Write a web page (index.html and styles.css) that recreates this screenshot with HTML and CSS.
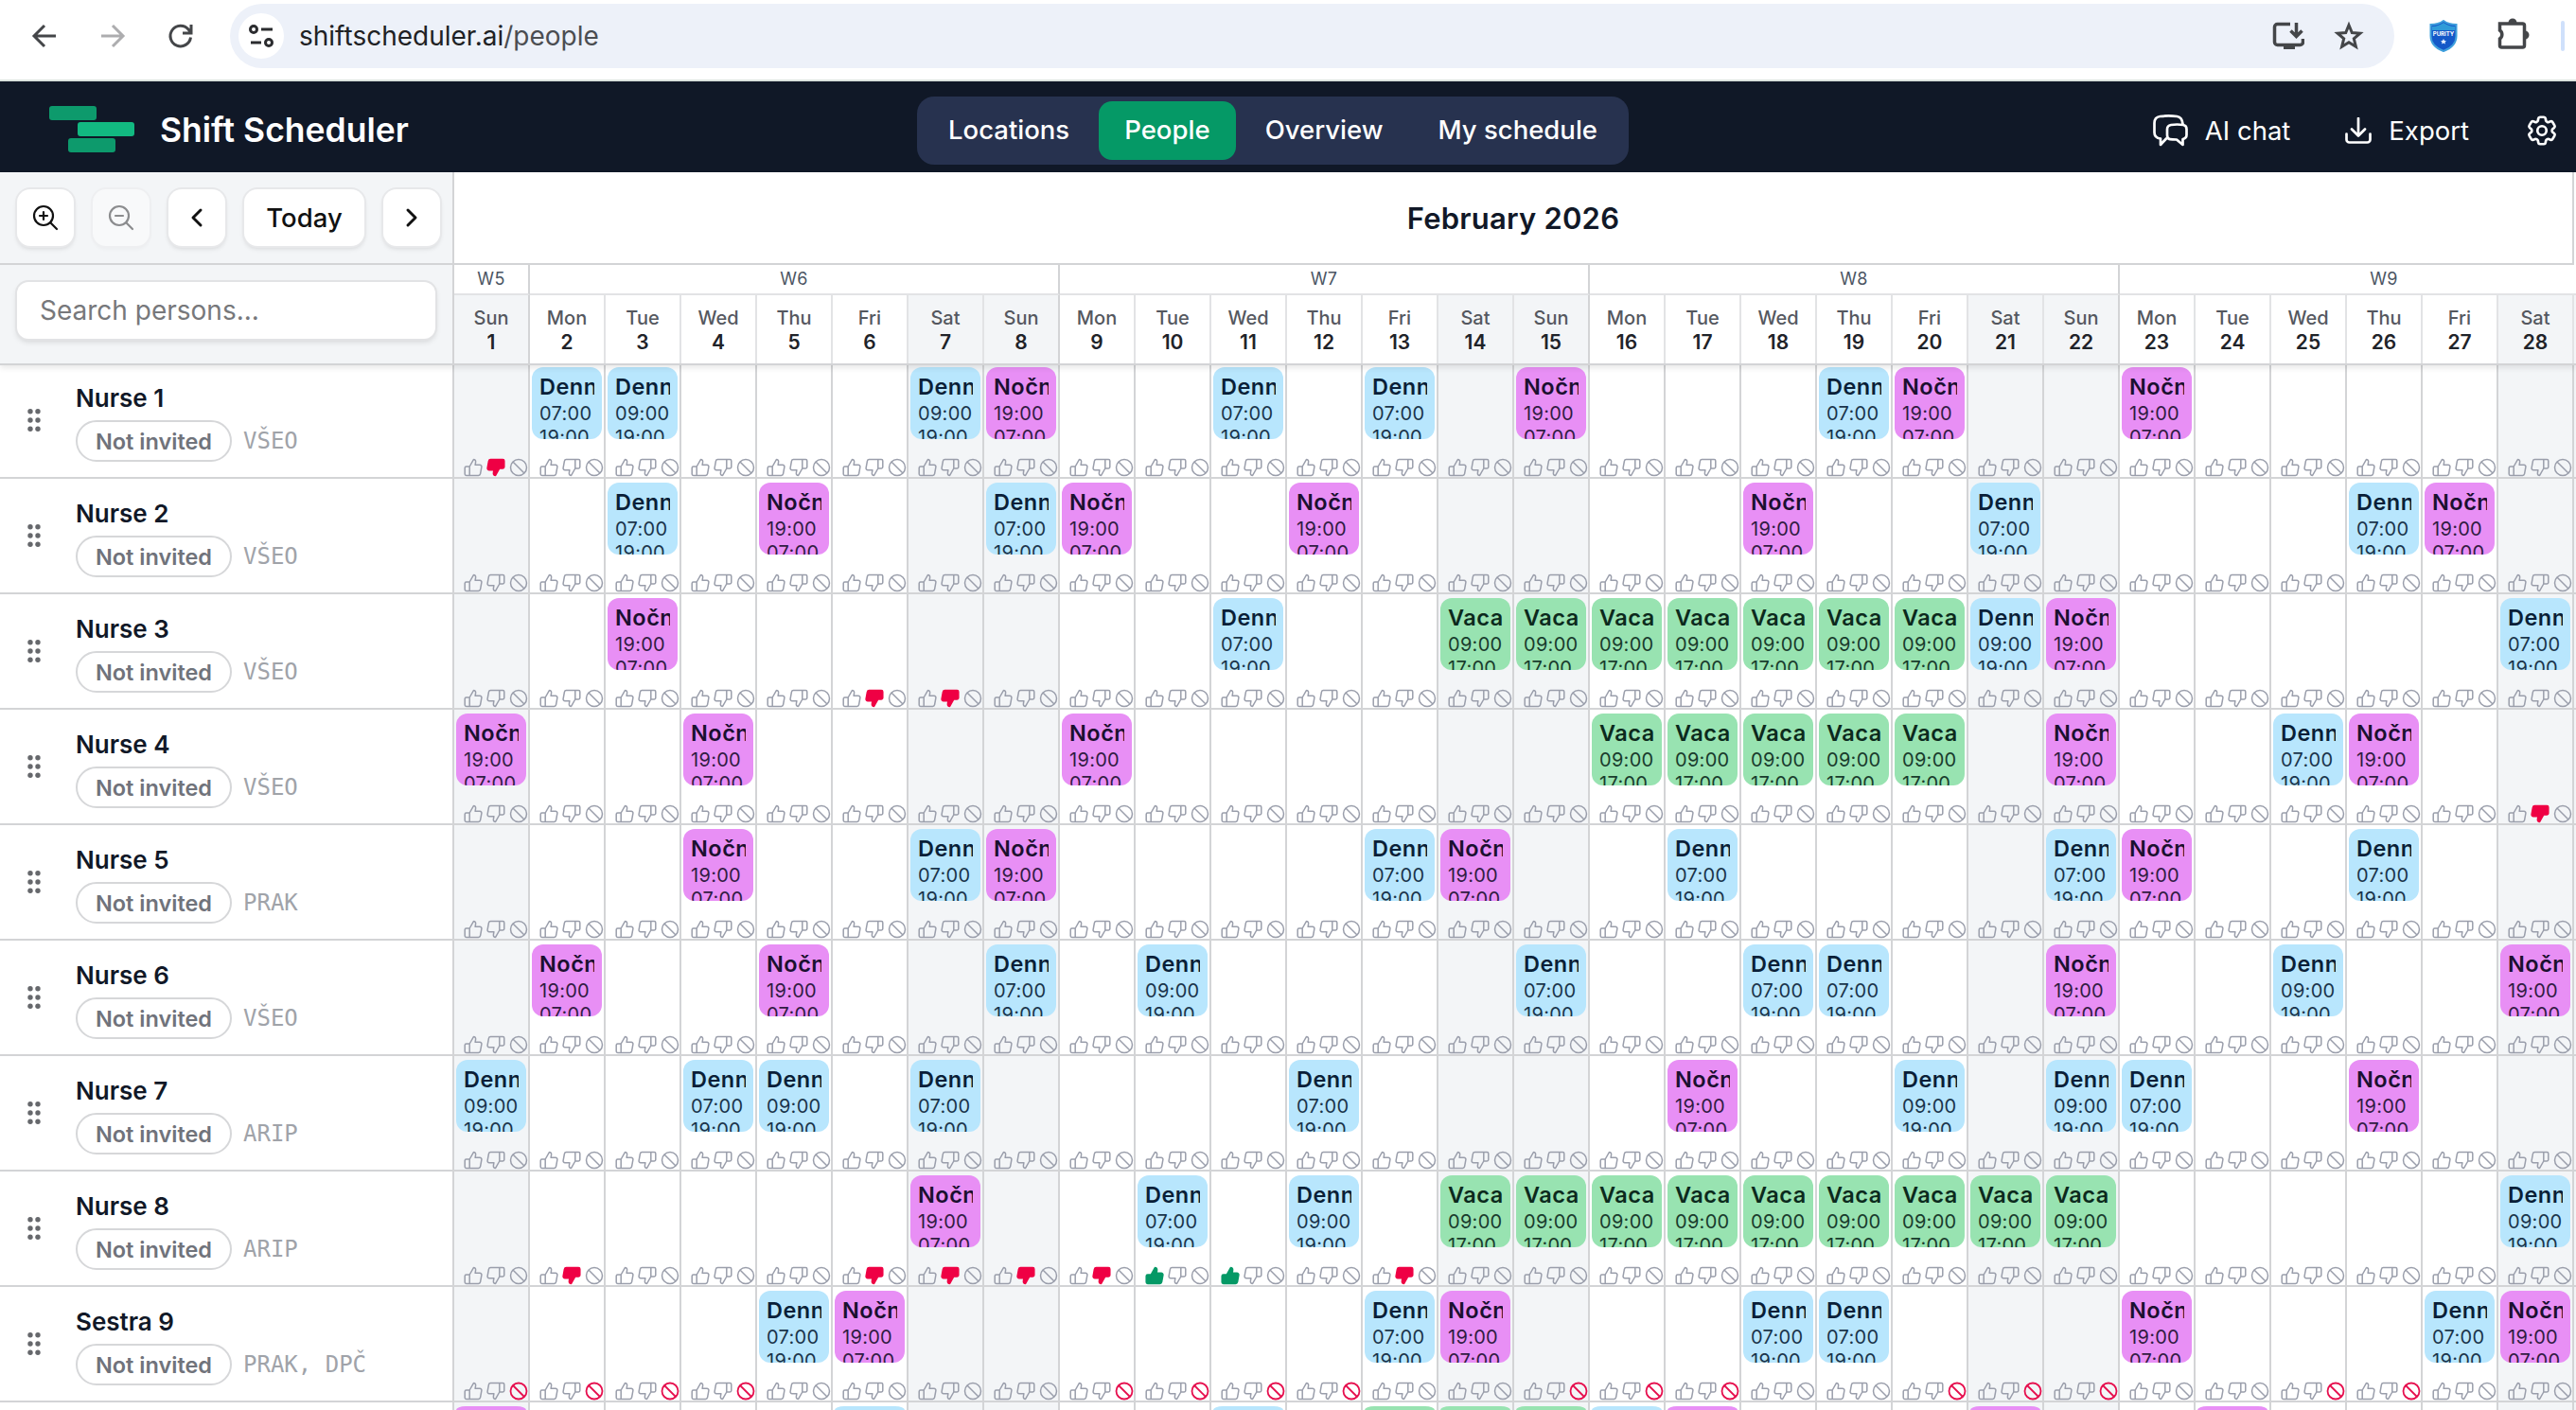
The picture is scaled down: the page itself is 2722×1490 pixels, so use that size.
FILE: index.html
```html
<!DOCTYPE html>
<html lang="en">
<head>
    <meta charset="UTF-8">
    <meta name="viewport" content="width=device-width, initial-scale=1.0">
    <title>Shift Scheduler</title>
    <link rel="stylesheet" href="styles.css">
</head>
<body>
    <svg class="symbols" aria-hidden="true">
        <symbol id="icon-up" viewBox="0 0 20 20">
            <path d="M6.2 9 10.4 1.6c1.5 0 2.5 1.1 2.2 2.7l-.5 3h4.9c1.3 0 2.1 1 1.9 2.1l-1.3 7.3c-.2 1-.9 1.7-2 1.7H6.2zM6.2 9H2.7c-.9 0-1.5.6-1.5 1.4V17c0 .8.6 1.4 1.5 1.4h3.5"/>
        </symbol>
        <symbol id="icon-down" viewBox="0 0 20 20">
            <path transform="rotate(180 10 10)" d="M6.2 9 10.4 1.6c1.5 0 2.5 1.1 2.2 2.7l-.5 3h4.9c1.3 0 2.1 1 1.9 2.1l-1.3 7.3c-.2 1-.9 1.7-2 1.7H6.2zM6.2 9H2.7c-.9 0-1.5.6-1.5 1.4V17c0 .8.6 1.4 1.5 1.4h3.5"/>
        </symbol>
        <symbol id="icon-ban" viewBox="0 0 20 20">
            <circle cx="10" cy="10" r="8.5"/>
            <path d="M4 4l12 12"/>
        </symbol>
    </svg>

    <div class="browser-bar">
        <div class="browser-nav">
            <svg width="28" height="28" viewBox="0 0 28 28"><path d="M26 14H3M14 3 3 14l11 11"/></svg>
            <svg class="disabled" width="28" height="28" viewBox="0 0 28 28"><path d="M2 14h23M14 3l11 11-11 11"/></svg>
            <svg width="28" height="28" viewBox="0 0 28 28"><path d="M24.5 15.5A10.8 10.8 0 1 1 22 7l2.5 3M25 2v9h-9"/></svg>
        </div>
        <div class="address">
            <span class="site-info">
                <svg width="26" height="26" viewBox="0 0 26 26"><circle cx="5" cy="6" r="3.5"/><path d="M13 6h12M2 20h11"/><circle cx="21" cy="20" r="3.5"/></svg>
            </span>
            <span class="url">shiftscheduler.ai<span>/people</span></span>
            <svg class="install" width="34" height="32" viewBox="0 0 34 32"><path d="M19 3.500H5.500a3 3 0 0 0-3 3v16a3 3 0 0 0 3 3h24a3 3 0 0 0 3-3V19M25.500 2v14M19.500 10.500l6 6 6-6"/><path class="solid" d="M12 26h12v4H12z"/></svg>
            <svg class="star" width="32" height="32" viewBox="0 0 32 32"><path d="M16 4.500l3.300 8 8.600.7-6.600 5.600 2.100 8.500L16 22.700l-7.400 4.600 2.100-8.500-6.600-5.600 8.600-.7z"/></svg>
        </div>
        <svg class="shield" width="30" height="34" viewBox="0 0 30 34">
            <path d="M15 1c4 3 8 4 13.500 4v12c0 8-5.500 13-13.500 16C7 30 1.500 25 1.500 17V5C7 5 11 4 15 1z" fill="#1458c8" stroke="#3f9fdc" stroke-width="2"/>
            <path d="M3 7c5 0 9-2 12-4 3 2 7 4 12 4v4H3z" fill="#2f9bd8"/>
            <text x="15" y="17" text-anchor="middle">PURITY</text>
            <path d="M15 20l1 2h2l-1.500 1.500.5 2-2-1-2 1 .5-2L12 22h2z" fill="#e6f1ff"/>
        </svg>
        <svg class="puzzle" width="36" height="36" viewBox="0 0 36 36"><path d="M5 8h22.500a2 2 0 0 1 2 2v21a2 2 0 0 1-2 2H5.500a2 2 0 0 1-2-2v-7a5.500 5.500 0 0 0 0-9V8z"/><path class="solid" d="M12.500 7a4.500 4.500 0 0 1 9 0zM30 15.500a4.500 4.500 0 0 1 0 9z"/></svg>
        <span class="browser-divider"></span>
    </div>

    <header class="app-header">
        <div class="brand">
            <svg width="92" height="50" viewBox="0 0 92 50">
                <rect x="0" y="0" width="50" height="15" rx="3" fill="#0d9a6c"/>
                <rect x="30" y="17" width="60" height="15" rx="3" fill="#12b981"/>
                <rect x="20" y="34" width="50" height="15" rx="3" fill="#0d9a6c"/>
            </svg>
            <span>Shift Scheduler</span>
        </div>
        <nav class="tabs">
            <a>Locations</a>
            <a class="active">People</a>
            <a>Overview</a>
            <a>My schedule</a>
        </nav>
        <div class="actions">
            <a class="chat">
                <svg width="38" height="36" viewBox="0 0 38 36"><path d="M9 26.500V33l6-6.500M9 26.500C4 26 2.500 23 2.500 20V10c0-4.500 2.500-6.500 6-7 6-.7 12-.7 18 0 3.500.5 5.500 3 6 8"/><path d="M20 12c4-.6 9-.6 13 0 2.500.4 3.500 2 3.500 4.500v6c0 2.500-1.500 4-4 4.500v6L26 27.500c-3 0-5 0-7-.3-2.500-.4-3-2-3-4.400v-6c0-3 1.500-4.400 4-4.800z"/></svg>
                AI chat
            </a>
            <a class="export">
                <svg width="28" height="28" viewBox="0 0 28 28"><path d="M14 1v18M7 12.500l7 7 7-7M1.500 17.500v6a3 3 0 0 0 3 3h19a3 3 0 0 0 3-3v-6"/></svg>
                Export
            </a>
            <svg class="gear" viewBox="0 0 24 24"><path d="M9.594 3.940c.090-.542.560-.940 1.110-.940h2.593c.550 0 1.020.398 1.110.940l.213 1.281c.063.374.313.686.645.870.074.040.147.083.220.127.325.196.720.257 1.075.124l1.217-.456a1.125 1.125 0 0 1 1.370.490l1.296 2.247a1.125 1.125 0 0 1-.260 1.431l-1.003.827c-.293.241-.438.613-.430.992a7.723 7.723 0 0 1 0 .255c-.008.378.137.750.430.991l1.004.827c.424.350.534.955.260 1.430l-1.298 2.247a1.125 1.125 0 0 1-1.369.491l-1.217-.456c-.355-.133-.750-.072-1.076.124a6.470 6.470 0 0 1-.220.128c-.331.183-.581.495-.644.869l-.213 1.281c-.090.543-.560.940-1.110.940h-2.594c-.550 0-1.019-.398-1.110-.940l-.213-1.281c-.062-.374-.312-.686-.644-.870a6.520 6.520 0 0 1-.220-.127c-.325-.196-.720-.257-1.076-.124l-1.217.456a1.125 1.125 0 0 1-1.369-.490l-1.297-2.247a1.125 1.125 0 0 1 .260-1.431l1.004-.827c.292-.240.437-.613.430-.991a6.932 6.932 0 0 1 0-.255c.007-.380-.138-.751-.430-.992l-1.004-.827a1.125 1.125 0 0 1-.260-1.430l1.297-2.247a1.125 1.125 0 0 1 1.370-.491l1.216.456c.356.133.751.072 1.076-.124.072-.044.146-.086.220-.128.332-.183.582-.495.644-.869l.214-1.280Z"/><circle cx="12" cy="12" r="3"/></svg>
        </div>
    </header>

    <div class="calendar-head">
        <div class="side-head">
            <div class="toolbar">
                <button class="btn"><svg width="28" height="28" viewBox="0 0 28 28"><circle cx="12" cy="12" r="10"/><path d="M19.500 19.500 26 26M12 8v8M8 12h8"/></svg></button>
                <button class="btn off"><svg width="28" height="28" viewBox="0 0 28 28"><circle cx="12" cy="12" r="10"/><path d="M19.500 19.500 26 26M8 12h8"/></svg></button>
                <button class="btn chevron"><svg width="28" height="28" viewBox="0 0 28 28"><path d="M18 6l-8 8 8 8"/></svg></button>
                <button class="btn today">Today</button>
                <button class="btn chevron"><svg width="28" height="28" viewBox="0 0 28 28"><path d="M10 6l8 8-8 8"/></svg></button>
            </div>
            <div class="search"><input type="text" placeholder="Search persons..."></div>
        </div>
        <div class="timeline-head">
            <div class="month">February 2026</div>
            <div class="weeks" id="weeks"></div>
            <div class="days" id="days"></div>
        </div>
    </div>
    <div class="rows" id="rows"></div>

    <script src="schedule.js"></script>
</body>
</html>
```
FILE: schedule.js
```js
var dayNames = ['Sun', 'Mon', 'Tue', 'Wed', 'Thu', 'Fri', 'Sat'];

var shiftTypes = {
    D7: ['Denn', '07:00', '19:00', 'denni'],
    D9: ['Denn', '09:00', '19:00', 'denni'],
    N: ['Nočn', '19:00', '07:00', 'nocni'],
    V: ['Vaca', '09:00', '17:00', 'vacation']
};

// shifts are keyed by the day of month, up / down / ban list the days with a wish set
var people = [
    { name: 'Nurse 1', tags: 'VŠEO', shifts: { 2: 'D7', 3: 'D9', 7: 'D9', 8: 'N', 11: 'D7', 13: 'D7', 15: 'N', 19: 'D7', 20: 'N', 23: 'N' }, down: [1] },
    { name: 'Nurse 2', tags: 'VŠEO', shifts: { 3: 'D7', 5: 'N', 8: 'D7', 9: 'N', 12: 'N', 18: 'N', 21: 'D7', 26: 'D7', 27: 'N' } },
    { name: 'Nurse 3', tags: 'VŠEO', shifts: { 3: 'N', 11: 'D7', 14: 'V', 15: 'V', 16: 'V', 17: 'V', 18: 'V', 19: 'V', 20: 'V', 21: 'D9', 22: 'N', 28: 'D7' }, down: [6, 7] },
    { name: 'Nurse 4', tags: 'VŠEO', shifts: { 1: 'N', 4: 'N', 9: 'N', 16: 'V', 17: 'V', 18: 'V', 19: 'V', 20: 'V', 22: 'N', 25: 'D7', 26: 'N' }, down: [28] },
    { name: 'Nurse 5', tags: 'PRAK', shifts: { 4: 'N', 7: 'D7', 8: 'N', 13: 'D7', 14: 'N', 17: 'D7', 22: 'D7', 23: 'N', 26: 'D7' } },
    { name: 'Nurse 6', tags: 'VŠEO', shifts: { 2: 'N', 5: 'N', 8: 'D7', 10: 'D9', 15: 'D7', 18: 'D7', 19: 'D7', 22: 'N', 25: 'D9', 28: 'N' } },
    { name: 'Nurse 7', tags: 'ARIP', shifts: { 1: 'D9', 4: 'D7', 5: 'D9', 7: 'D7', 12: 'D7', 17: 'N', 20: 'D9', 22: 'D9', 23: 'D7', 26: 'N' } },
    { name: 'Nurse 8', tags: 'ARIP', shifts: { 7: 'N', 10: 'D7', 12: 'D9', 14: 'V', 15: 'V', 16: 'V', 17: 'V', 18: 'V', 19: 'V', 20: 'V', 21: 'V', 22: 'V', 28: 'D9' }, up: [10, 11], down: [2, 6, 7, 8, 9, 13] },
    { name: 'Sestra 9', tags: 'PRAK, DPČ', shifts: { 5: 'D7', 6: 'N', 13: 'D7', 14: 'N', 18: 'D7', 19: 'D7', 23: 'N', 27: 'D7', 28: 'N' }, ban: [1, 2, 3, 4, 9, 10, 11, 12, 15, 16, 17, 20, 21, 22, 25, 26] }
];

// Next row, only its top edge is in view
var nextShifts = { 1: 'N', 6: 'D7', 11: 'D7', 13: 'V', 14: 'V', 15: 'V', 16: 'D7', 17: 'N', 21: 'N', 24: 'N' };

function isWeekend(day) {
    return day % 7 <= 1;
}

function icon(kind, person, day) {
    var on = person[kind] && person[kind].indexOf(day) !== -1;
    return '<svg class="wish ' + kind + (on ? ' on' : '') + '"><use href="#icon-' + kind + '"/></svg>';
}

function cell(person, day) {
    var html = '<div class="cell' + (isWeekend(day) ? ' weekend' : '') + '"><div class="slot">';
    if (person.shifts[day]) {
        var t = shiftTypes[person.shifts[day]];
        html += '<div class="shift ' + t[3] + '"><b>' + t[0] + '</b><span>' + t[1] + '</span><span>' + t[2] + '</span></div>';
    }
    html += '</div><div class="wishes">' + icon('up', person, day) + icon('down', person, day) + icon('ban', person, day) + '</div>';
    return html + '</div>';
}

// Header
document.getElementById('weeks').innerHTML = [5, 6, 7, 8, 9].map(function (w) {
    return '<div class="week' + (w === 5 ? ' short' : '') + '">W' + w + '</div>';
}).join('');

var days = '';
for (var d = 1; d <= 28; d++) {
    days += '<div class="day' + (isWeekend(d) ? ' weekend' : '') + (d % 7 === 1 ? ' week-end' : '') + '"><span>' + dayNames[(d - 1) % 7] + '</span><b>' + d + '</b></div>';
}
document.getElementById('days').innerHTML = days + '<div class="rest"></div>';

// Rows
var dots = '<svg class="handle" width="16" height="26" viewBox="0 0 16 26">';
[3.7, 13, 22.3].forEach(function (y) {
    dots += '<circle cx="4" cy="' + y + '" r="2.7"/><circle cx="12" cy="' + y + '" r="2.7"/>';
});
dots += '</svg>';

var rows = people.map(function (p) {
    var html = '<div class="row"><div class="person">' + dots +
        '<div class="info"><div class="name">' + p.name + '</div>' +
        '<div class="meta"><span class="pill">Not invited</span><span class="tags">' + p.tags + '</span></div></div></div>';
    for (var i = 1; i <= 28; i++) {
        html += cell(p, i);
    }
    return html + '<div class="rest"></div></div>';
}).join('');

rows += '<div class="row peek"><div class="person"></div>';
for (var n = 1; n <= 28; n++) {
    rows += '<div class="cell' + (isWeekend(n) ? ' weekend' : '') + '">' +
        (nextShifts[n] ? '<div class="edge ' + shiftTypes[nextShifts[n]][3] + '"></div>' : '') + '</div>';
}
document.getElementById('rows').innerHTML = rows + '<div class="rest"></div></div>';
```
FILE: styles.css
```css
* {
    box-sizing: border-box;
}

body {
    margin: 0;
    height: 1490px;
    overflow: hidden;
    background-color: #fff;
    font-family: Inter, sans-serif;
    color: #111827;
}

svg {
    display: block;
    flex-shrink: 0;
    fill: none;
    stroke: currentColor;
}

.symbols {
    position: absolute;
    width: 0;
    height: 0;
}

/* Browser bar */
.browser-bar {
    display: flex;
    align-items: center;
    height: 86px;
    padding-bottom: 8px;
    border-bottom: 2px solid #dbe3de;
    color: #444649;
}

.browser-nav {
    display: flex;
    gap: 44px;
    padding-left: 33px;
    width: 243px;
}

.browser-nav svg {
    stroke-width: 3;
}

.browser-nav .disabled {
    color: #adadaf;
}

.address {
    display: flex;
    align-items: center;
    width: 2287px;
    height: 68px;
    padding: 0 32px 0 9px;
    border-radius: 34px;
    background-color: #edf1f9;
}

.site-info {
    display: flex;
    align-items: center;
    justify-content: center;
    width: 48px;
    height: 48px;
    border-radius: 50%;
    background-color: #fff;
    color: #2b2c2f;
}

.site-info svg {
    stroke-width: 3;
}

.url {
    flex: 1;
    margin-left: 16px;
    font-size: 28px;
    color: #202124;
}

.url span {
    color: #4b4d51;
}

.install {
    margin-right: 31px;
    stroke-width: 3.5;
}

.star {
    stroke-width: 3;
}

.solid {
    fill: currentColor;
    stroke: none;
}

.shield {
    margin-left: 37px;
    stroke: none;
}

.shield text {
    font-size: 6px;
    font-weight: 700;
    fill: #fff;
}

.puzzle {
    margin: -6px 0 0 41px;
    stroke-width: 3.5;
}

.browser-divider {
    width: 4px;
    height: 32px;
    margin-left: 32px;
    border-radius: 2px;
    background-color: #cfe0fb;
}

/* App header */
.app-header {
    display: grid;
    grid-template-columns: 969px 752px 1fr;
    align-items: center;
    height: 96px;
    padding-top: 8px;
    background-color: #101827;
    color: #fff;
}

.brand {
    display: flex;
    align-items: center;
    gap: 25px;
    padding-left: 52px;
    font-size: 35.5px;
    font-weight: 600;
    line-height: 44px;
}

.brand svg {
    margin-top: -3px;
    stroke: none;
}

.tabs {
    display: flex;
    justify-content: space-between;
    align-items: center;
    height: 72px;
    padding: 0 6px;
    border-radius: 18px;
    background-color: #27324f;
    font-size: 27.5px;
    font-weight: 500;
}

.tabs a {
    height: 62px;
    padding: 0 27px;
    border-radius: 14px;
    line-height: 61px;
    white-space: nowrap;
}

.tabs .active {
    background-color: #059966;
}

.actions {
    display: flex;
    align-items: center;
    justify-content: flex-end;
    padding-right: 19px;
    font-size: 27.5px;
}

.actions a {
    display: flex;
    align-items: center;
    white-space: nowrap;
}

.actions svg {
    stroke-width: 2.7;
    stroke-linecap: round;
    stroke-linejoin: round;
}

.chat {
    gap: 18px;
    margin-right: 58px;
}

.export {
    gap: 18px;
    margin-right: 58px;
}

.actions .gear {
    width: 38px;
    height: 38px;
    margin-right: -2px;
    stroke-width: 1.7;
}

/* Calendar header */
.calendar-head {
    position: relative;
    z-index: 1;
    display: flex;
    height: 204px;
    border-bottom: 2px solid #d3d4d6;
    box-shadow: 0 3px 6px rgba(0, 0, 0, 0.09);
    background-color: #fff;
}

.side-head {
    flex-shrink: 0;
    width: 480px;
    border-right: 2px solid #d3d4d6;
    background-color: #f3f5f7;
}

.toolbar {
    display: flex;
    gap: 20px;
    height: 98px;
    padding: 18px 0 0 18px;
    border-bottom: 2px solid #d3d4d6;
}

.btn {
    display: flex;
    flex-shrink: 0;
    align-items: center;
    justify-content: center;
    width: 60px;
    height: 60px;
    padding: 0;
    border: none;
    border-radius: 14px;
    background-color: #fff;
    box-shadow: 0 0 0 2px #e7e8ea, 0 3px 5px rgba(0, 0, 0, 0.12);
    font-family: inherit;
    font-size: 27.5px;
    font-weight: 500;
    color: #111;
}

.btn svg {
    stroke-width: 2.2;
    stroke-linecap: round;
}

.btn.off {
    background-color: #f8f9fa;
    box-shadow: 0 0 0 2px #eeeff1, 0 3px 4px rgba(0, 0, 0, 0.04);
    color: #8b8c8e;
}

.btn.chevron svg {
    stroke-width: 3;
    stroke-linejoin: round;
}

.btn.today {
    width: 127px;
}

.search {
    padding: 18px 0 0 18px;
}

.search input {
    display: block;
    width: 442px;
    height: 60px;
    padding: 0 24px;
    border: none;
    border-radius: 12px;
    background-color: #fff;
    box-shadow: 0 0 0 2px #e2e3e5, 0 3px 6px rgba(0, 0, 0, 0.14);
    font-family: inherit;
    font-size: 28px;
}

.search input::placeholder {
    color: #77787b;
}

.timeline-head {
    flex-shrink: 0;
    width: 2242px;
}

.month {
    width: 2240px;
    height: 98px;
    border-right: 2px solid #d3d4d6;
    border-bottom: 2px solid #d3d4d6;
    font-size: 31px;
    font-weight: 600;
    line-height: 97px;
    letter-spacing: 0.2px;
    text-align: center;
}

.weeks,
.days {
    display: flex;
}

.week {
    flex-shrink: 0;
    width: 560px;
    height: 32px;
    border-right: 2px solid #d3d4d6;
    border-bottom: 2px solid #e2e3e5;
    font-size: 18px;
    line-height: 30px;
    letter-spacing: 0.4px;
    text-align: center;
    color: #4b5563;
}

.week.short {
    width: 80px;
}

.day {
    flex-shrink: 0;
    width: 80px;
    height: 72px;
    padding-top: 12px;
    border-right: 2px solid #e2e3e5;
    text-align: center;
}

.day.week-end {
    border-right-color: #d3d4d6;
}

.day span,
.day b {
    display: block;
    font-size: 20px;
    line-height: 25px;
}

.day span {
    font-weight: 500;
    color: #55585f;
}

.day b {
    font-size: 21px;
    font-weight: 600;
    color: #1f2329;
}

.weekend,
.rest {
    background-color: #f3f5f7;
}

.rest {
    width: 2px;
}

/* Rows */
.rows {
    margin-top: -2px;
}

.row {
    display: flex;
    height: 122px;
    border-bottom: 2px solid #d3d4d6;
}

.person {
    display: flex;
    flex-shrink: 0;
    align-items: center;
    width: 480px;
    padding-left: 28px;
    border-right: 2px solid #d3d4d6;
}

.handle {
    fill: #66686c;
    stroke: none;
}

.info {
    height: 120px;
    padding: 21px 0 0 36px;
}

.name {
    margin-bottom: 7px;
    font-size: 26px;
    font-weight: 600;
    line-height: 32px;
}

.meta {
    display: flex;
    align-items: center;
    gap: 12px;
}

.pill {
    width: 165px;
    height: 44px;
    border: 2px solid #d6d7d9;
    border-radius: 22px;
    font-size: 23.5px;
    font-weight: 600;
    line-height: 41px;
    text-align: center;
    color: #70737b;
}

.tags {
    font-family: "DejaVu Sans Mono", monospace;
    font-size: 24px;
    color: #a0a3a9;
}

.cell {
    flex-shrink: 0;
    width: 80px;
    border-right: 2px solid #d3d4d6;
}

.slot {
    height: 100px;
    padding: 4px 2px;
}

.shift {
    height: 76px;
    padding: 9px 8px 0;
    border-radius: 12px;
    overflow: hidden;
    color: #0a1f38;
}

.shift b,
.shift span {
    display: block;
    overflow: hidden;
    white-space: nowrap;
}

.shift b {
    margin-bottom: 4px;
    font-size: 23.5px;
    font-weight: 600;
    line-height: 24px;
    letter-spacing: 0.5px;
}

.shift span {
    font-size: 20px;
    line-height: 25px;
    letter-spacing: 0.3px;
    opacity: 0.9;
}

.denni {
    background-color: #b8e6fd;
}

.nocni {
    background-color: #e88ff5;
}

.shift.nocni {
    color: #1b1030;
}

.vacation {
    background-color: #98e3b1;
}

.shift.vacation {
    color: #0c2a1d;
}

.row.peek {
    height: 8px;
    border-bottom: none;
    overflow: hidden;
}

.edge {
    height: 4px;
    margin: 4px 2px 0;
    border-radius: 10px 10px 0 0 / 4px 4px 0 0;
}

.wishes {
    display: flex;
    gap: 4px;
    padding-left: 10px;
}

.wish {
    width: 20px;
    height: 20px;
    stroke-width: 1.5;
    stroke-linejoin: round;
    color: #9a9eab;
}

.wish.up.on {
    fill: currentColor;
    color: #059966;
}

.wish.down.on {
    fill: currentColor;
    color: #ef0044;
}

.wish.ban.on {
    color: #e60f4e;
    stroke-width: 1.8;
}
```
